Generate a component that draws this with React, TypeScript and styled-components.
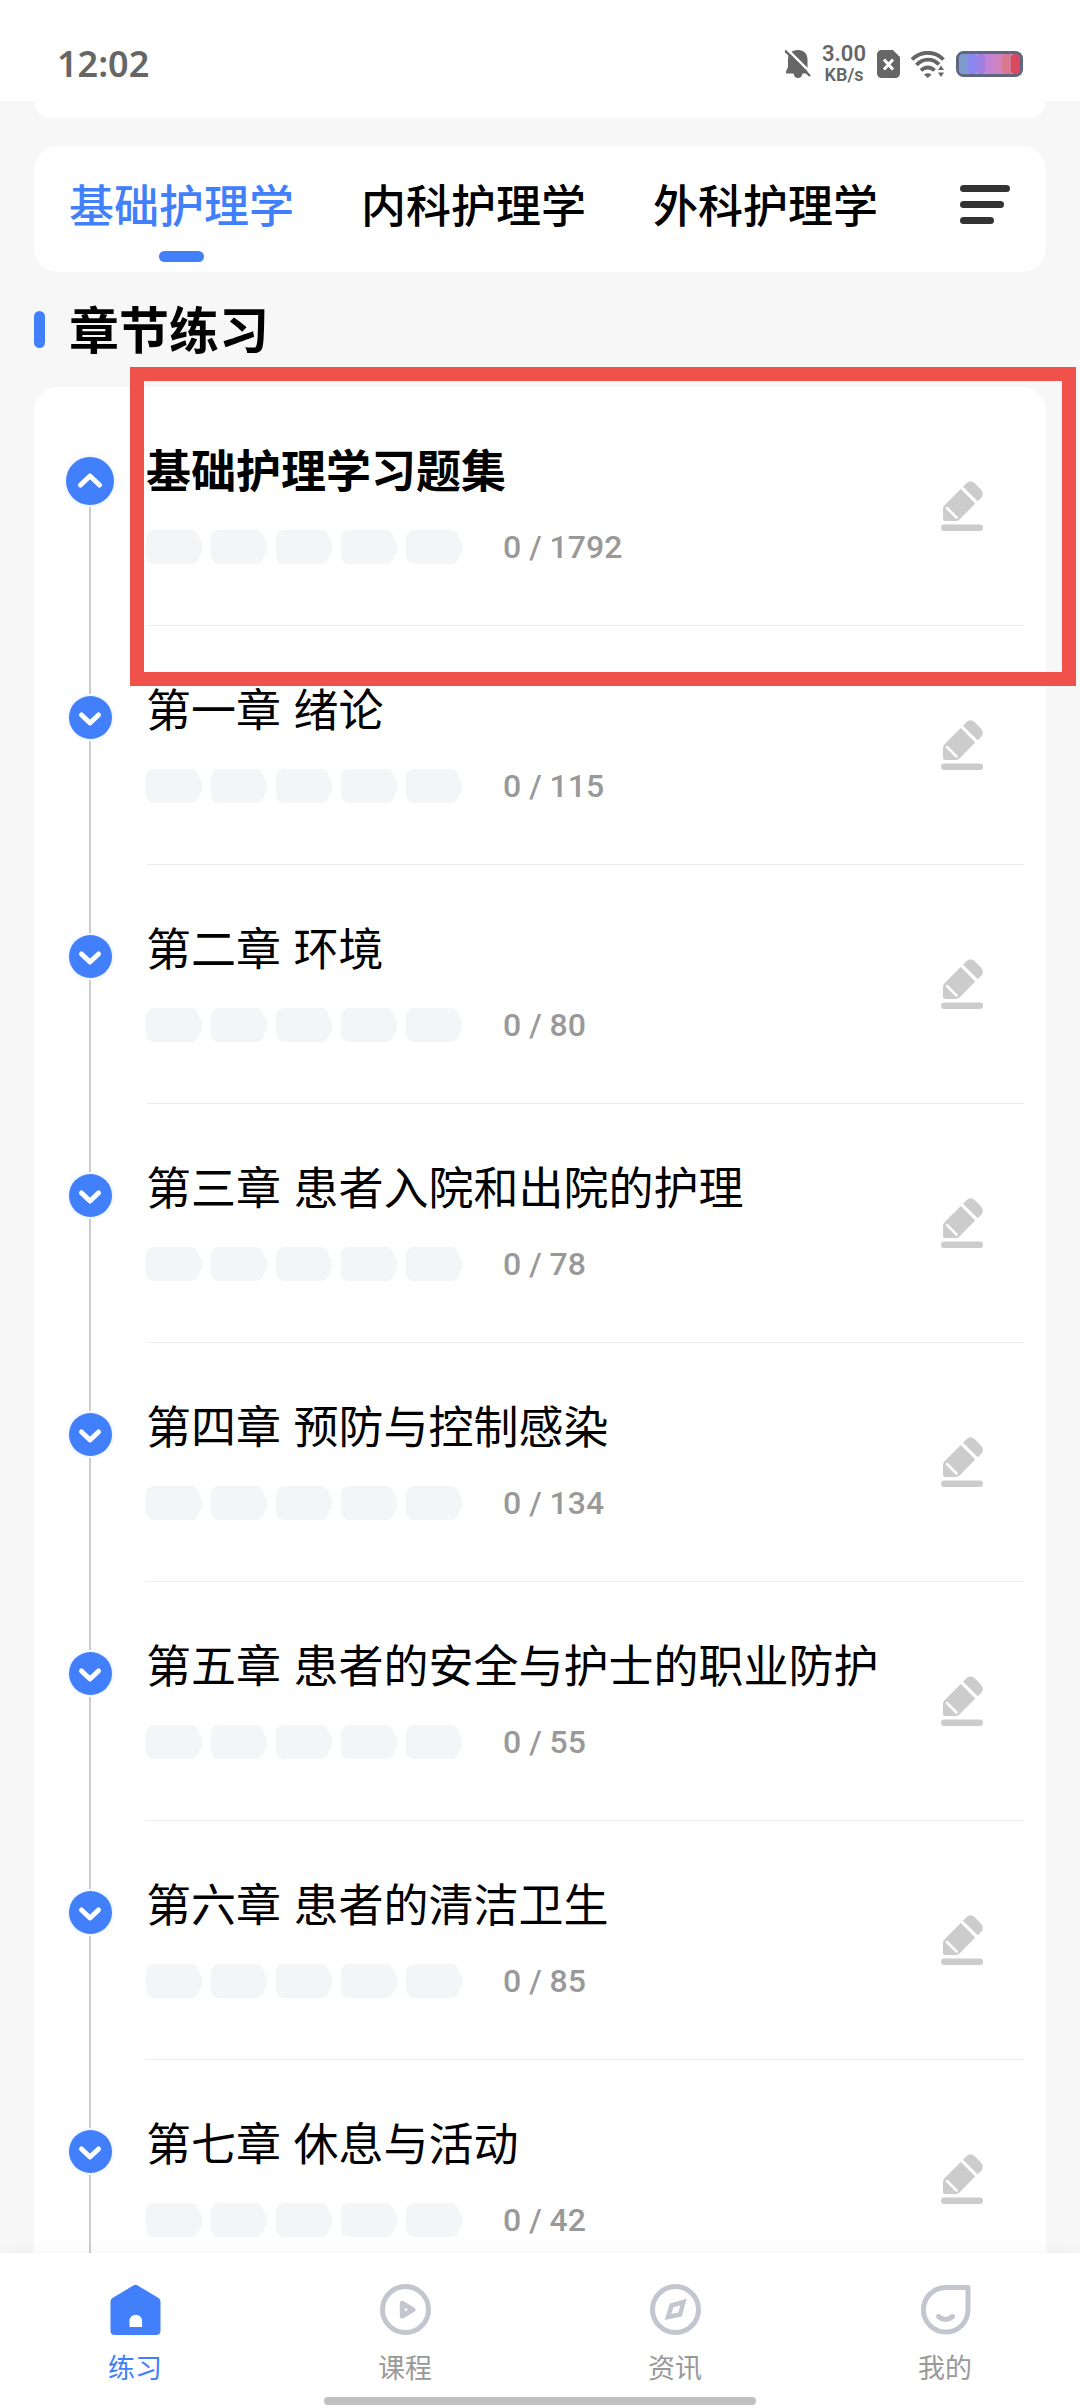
import React from "react";
import styled, { createGlobalStyle, css } from "styled-components";

const BLUE = "#417ffb";
const INK = "#000000";
const MUTED = "#999999";
const STATUS = "#666666";
const ICON_GREY = "#c3c6ce";

const GlobalStyle = createGlobalStyle`
  *, *::before, *::after { box-sizing: border-box; }
  body {
    margin: 0;
    background: #f7f7f7;
    color: ${INK};
    font-family: "Liberation Sans", "Noto Sans CJK SC", sans-serif;
  }
  button {
    margin: 0;
    padding: 0;
    border: 0;
    background: none;
    color: inherit;
    font: inherit;
    cursor: pointer;
  }
  h1, h2, p, ul, ol { margin: 0; padding: 0; }
  ul, ol { list-style: none; }
  svg { display: block; }
`;

const Shell = styled.div`
  display: flex;
  flex-direction: column;
  height: 100vh;
`;

/* Status bar */

const StatusBar = styled.header`
  display: flex;
  flex: none;
  align-items: center;
  justify-content: space-between;
  padding: 39px 57px 12px;
  background: #ffffff;
  color: ${STATUS};
  font-family: "Noto Sans", sans-serif;
`;

const Clock = styled.time`
  font-size: 36px;
  font-weight: 600;
  line-height: 50px;
`;

const StatusIcons = styled.div`
  display: flex;
  align-items: center;
  gap: 11px;
`;

const Speed = styled.div`
  display: flex;
  flex-direction: column;
  align-items: center;
  font-family: Roboto, sans-serif;
  font-weight: 600;
`;

const SpeedValue = styled.span`
  font-size: 22px;
  line-height: 22px;
`;

const SpeedUnit = styled.span`
  font-size: 18px;
  line-height: 20px;
`;

/* Scrolling content */

const Scroller = styled.main`
  flex: 1;
  min-height: 0;
  padding: 0 34px;
  overflow: hidden auto;
  scrollbar-width: none;
`;

const PreviousCard = styled.div`
  height: 17px;
  margin-bottom: 28px;
  border-radius: 0 0 22px 22px;
  background: #ffffff;
`;

const SubjectCard = styled.nav`
  display: flex;
  align-items: flex-start;
  justify-content: space-between;
  padding: 32px 36px 10px 35px;
  border-radius: 24px;
  background: #ffffff;
`;

const SubjectTabs = styled.div`
  display: flex;
  gap: 67px;
`;

const SubjectTab = styled.button<{ $active?: boolean }>`
  display: flex;
  flex-direction: column;
  align-items: center;
  gap: 13px;
  font-size: 45px;
  font-weight: 500;
  line-height: 60px;
  white-space: nowrap;
  color: ${(p) => (p.$active ? BLUE : INK)};

  &::after {
    content: "";
    width: 45px;
    height: 11px;
    border-radius: 6px;
    background: ${(p) => (p.$active ? BLUE : "transparent")};
  }
`;

const SectionHeading = styled.div`
  display: flex;
  align-items: center;
  gap: 24px;
  height: 115px;

  &::before {
    content: "";
    width: 11px;
    height: 37px;
    border-radius: 6px;
    background: ${BLUE};
  }
`;

const SectionTitle = styled.h1`
  padding-top: 4px;
  font-size: 50px;
  font-weight: 700;
  line-height: 60px;
`;

const ChapterCard = styled.section`
  position: relative;
  padding: 0 22px 0 32px;
  border-radius: 24px;
  background: #ffffff;
`;

const Highlight = styled.div`
  position: absolute;
  top: -20px;
  right: -30px;
  left: 96px;
  height: 319px;
  border: 14px solid #f0524b;
  pointer-events: none;
`;

const ChapterRow = styled.li`
  display: flex;
  gap: 32px;
`;

const Track = styled.div`
  display: flex;
  flex: none;
  flex-direction: column;
  align-items: center;
  width: 48px;
`;

const lineFill = css`
  width: 2px;
  background: #cccccc;
`;

const LineAbove = styled.span<{ $hidden: boolean }>`
  ${lineFill}
  height: 68px;
  margin-bottom: 2px;
  visibility: ${(p) => (p.$hidden ? "hidden" : "visible")};
`;

const LineBelow = styled.span`
  ${lineFill}
  flex: 1;
  margin-top: 2px;
`;

const Toggle = styled.button<{ $open: boolean }>`
  display: grid;
  flex: none;
  place-items: center;
  width: ${(p) => (p.$open ? 48 : 43)}px;
  height: ${(p) => (p.$open ? 48 : 43)}px;
  border-radius: 50%;
  background: ${BLUE};
  box-shadow: 0 0 4px rgba(65, 127, 251, 0.2);
`;

const ChapterBody = styled.div`
  display: flex;
  flex: 1;
  align-items: center;
  justify-content: space-between;
  padding-right: 41px;
  border-bottom: 1px solid #ededed;
`;

const ChapterInfo = styled.div`
  padding: 56px 0 61px;
`;

const ChapterTitle = styled.h2<{ $strong: boolean }>`
  margin-bottom: 27px;
  font-size: 45px;
  font-weight: ${(p) => (p.$strong ? 700 : 400)};
  line-height: 60px;
`;

const Progress = styled.div`
  display: flex;
  align-items: center;
  gap: 41px;
`;

const Cells = styled.div`
  display: flex;
  gap: 9px;
`;

const Count = styled.p`
  color: ${MUTED};
  font-family: Roboto, sans-serif;
  font-size: 32px;
  font-weight: 500;
  line-height: 34px;
`;

/* Bottom navigation */

const BottomBar = styled.footer`
  position: relative;
  flex: none;
  padding: 31px 0 3px;
  background: #ffffff;
  box-shadow: 0 -4px 16px rgba(0, 0, 0, 0.03);
`;

const BottomLinks = styled.nav`
  display: flex;
`;

const BottomLink = styled.a<{ $active?: boolean }>`
  display: flex;
  flex: 1;
  flex-direction: column;
  align-items: center;
  gap: 16px;
  color: ${(p) => (p.$active ? BLUE : MUTED)};
  font-size: 27px;
  line-height: 36px;
  text-decoration: none;
`;

const HomeIndicator = styled.div`
  width: 40%;
  height: 8px;
  margin: 10px auto 0;
  border-radius: 4px;
  background: #c0c0c0;
`;

/* Drawings */

const BellOffIcon = () => (
  <svg width="26" height="30" viewBox="0 0 26 30" aria-hidden="true">
    <path
      fill={STATUS}
      d="M13 1C6.500 1 3 5 3 10.500V18L1 22.500V24.500H8.500C9 27.500 10.700 29 13 29S17 27.500 17.500 24.500H22.500V10.500C22.500 5 19 1 13 1Z"
    />
    <path stroke="#ffffff" strokeWidth="2.500" d="M2 0L27 25" />
    <path stroke={STATUS} strokeWidth="2.400" d="M0 1.500L25 27" />
  </svg>
);

const SimOffIcon = () => (
  <svg width="23" height="28" viewBox="0 0 23 28" aria-hidden="true">
    <path
      fill={STATUS}
      d="M4.500 0H16L23 7V23.500A4.500 4.500 0 0 1 18.500 28H4.500A4.500 4.500 0 0 1 0 23.500V4.500A4.500 4.500 0 0 1 4.500 0Z"
    />
    <path stroke="#ffffff" strokeWidth="3" d="M7 9.500L16 19.500M16 9.500L7 19.500" />
  </svg>
);

const WifiIcon = () => (
  <svg width="34" height="27" viewBox="0 0 34 27" aria-hidden="true">
    <g fill="none" stroke={STATUS} strokeWidth="3.800">
      <path d="M1 8.500C10 -0.500 23.500 -0.500 32.500 8.500" />
      <path d="M5.500 14C12 7 21.500 7 28 13.500" />
      <path d="M10 19.500C14 15.500 19.500 15.500 23.500 19.500" />
    </g>
    <path fill={STATUS} d="M13 23.500C15.500 21.700 18 21.700 20.500 23.500L16.800 27Z" />
    <path fill={STATUS} d="M30 14.500L33 19H27ZM30 26L33 21.500H27Z" />
  </svg>
);

const BatteryIcon = () => (
  <svg width="67" height="26" viewBox="0 0 67 26" aria-hidden="true">
    <rect x="1.500" y="1.500" width="64" height="23" rx="6" fill="#b39ad6" stroke="#5e6682" strokeWidth="3" />
    <rect x="3" y="3" width="12" height="20" rx="4" fill="#7f9bcf" />
    <rect x="12" y="3" width="9" height="20" rx="3" fill="#8a86ee" />
    <rect x="21" y="3" width="8" height="20" rx="3" fill="#a07fe0" />
    <rect x="29" y="3" width="10" height="20" rx="3" fill="#c283d0" />
    <rect x="37" y="3" width="10" height="20" rx="3" fill="#ce83be" />
    <rect x="46" y="3" width="10" height="20" rx="3" fill="#d97990" />
    <rect x="55" y="3" width="9" height="20" rx="4" fill="#d9485f" />
  </svg>
);

const MenuIcon = () => (
  <svg width="50" height="60" viewBox="0 0 50 60" fill="#333333" aria-hidden="true">
    <rect x="0" y="7" width="50" height="7" rx="3.500" />
    <rect x="0" y="23" width="44" height="7" rx="3.500" />
    <rect x="0" y="39" width="34" height="7" rx="3.500" />
  </svg>
);

const ChevronIcon = ({ up }: { up: boolean }) => (
  <svg width="26" height="18" viewBox="0 0 26 18" aria-hidden="true">
    <path
      d={up ? "M3.500 13L13 4L22.500 13" : "M4.500 6L13 14L21.500 6"}
      fill="none"
      stroke="#ffffff"
      strokeWidth="5"
      strokeLinecap="round"
      strokeLinejoin="round"
    />
  </svg>
);

const CellIcon = () => (
  <svg width="56" height="34" viewBox="0 0 56 34" fill="#f4f5f7" aria-hidden="true">
    <path d="M8 0H45C49 0 52 3 53 8L54 11Q56 11 56 13V21Q56 24 54 24L53 27C52 31 49 34 45 34H8A8 8 0 0 1 0 26V8A8 8 0 0 1 8 0Z" />
  </svg>
);

const PencilIcon = () => (
  <svg width="42" height="50" viewBox="0 0 42 50" fill="#cccccc" aria-hidden="true">
    <path d="M22 5.800L25.500 2.200Q29.500 -1.800 33.500 2L39.500 8Q43.500 12.500 40.500 16.500L36.800 20.300Z" />
    <path d="M19.800 8L34.200 22.500L19 38Q17 40 15 40H4Q2 40 2 38V28Q2 25.500 4 23.800Z" />
    <path d="M6 27L15.500 36.500" stroke="#ffffff" strokeWidth="2.500" strokeLinecap="round" />
    <rect x="0" y="43.500" width="42" height="6.500" rx="3.250" />
  </svg>
);

const HomeIcon = () => (
  <svg width="51" height="51" viewBox="0 0 51 51" aria-hidden="true">
    <path
      fill={BLUE}
      d="M23.300 1.500Q25.500 0 27.700 1.500L48.500 14Q50.500 15.300 50.500 17.500V46.500Q50.500 51 46 51H5Q0.500 51 0.500 46.500V17.500Q0.500 15.300 2.500 14Z"
    />
    <path fill="#ffffff" d="M19.500 43V37A6.300 6.300 0 0 1 32.100 37V43Z" />
  </svg>
);

const CourseIcon = () => (
  <svg width="51" height="51" viewBox="0 0 51 51" fill="none" stroke={ICON_GREY} strokeWidth="5" aria-hidden="true">
    <circle cx="25.500" cy="25.500" r="23" />
    <path strokeLinejoin="round" d="M22.300 19.300V32L33 25.700Z" />
  </svg>
);

const NewsIcon = () => (
  <svg width="51" height="51" viewBox="0 0 51 51" fill="none" stroke={ICON_GREY} strokeWidth="5" aria-hidden="true">
    <circle cx="25.500" cy="25.500" r="23" />
    <path strokeWidth="4.500" d="M21.500 21.500L33.500 18L30 30.500L18 33Z" />
  </svg>
);

const ProfileIcon = () => (
  <svg
    width="51"
    height="51"
    viewBox="0 0 51 51"
    fill="none"
    stroke={ICON_GREY}
    strokeWidth="5"
    strokeLinecap="round"
    strokeLinejoin="round"
    aria-hidden="true"
  >
    <path d="M25.500 3.500H48V26A22.300 22.300 0 1 1 25.500 3.500Z" />
    <path d="M18.500 32.500Q25.500 38.500 32.500 32.500" />
  </svg>
);

/* Data */

const subjects = ["基础护理学", "内科护理学", "外科护理学"];

const chapters = [
  { title: "基础护理学习题集", total: 1792 },
  { title: "第一章 绪论", total: 115 },
  { title: "第二章 环境", total: 80 },
  { title: "第三章 患者入院和出院的护理", total: 78 },
  { title: "第四章 预防与控制感染", total: 134 },
  { title: "第五章 患者的安全与护士的职业防护", total: 55 },
  { title: "第六章 患者的清洁卫生", total: 85 },
  { title: "第七章 休息与活动", total: 42 },
];

const destinations = [
  { label: "练习", href: "#practice", Icon: HomeIcon },
  { label: "课程", href: "#courses", Icon: CourseIcon },
  { label: "资讯", href: "#news", Icon: NewsIcon },
  { label: "我的", href: "#me", Icon: ProfileIcon },
];

const Chapter = ({ title, total, root }: { title: string; total: number; root: boolean }) => (
  <ChapterRow>
    <Track>
      <LineAbove $hidden={root} />
      <Toggle $open={root} type="button" aria-label={title} aria-expanded={root}>
        <ChevronIcon up={root} />
      </Toggle>
      <LineBelow />
    </Track>
    <ChapterBody>
      <ChapterInfo>
        <ChapterTitle $strong={root}>{title}</ChapterTitle>
        <Progress>
          <Cells>
            {[0, 1, 2, 3, 4].map((n) => (
              <CellIcon key={n} />
            ))}
          </Cells>
          <Count>0 / {total}</Count>
        </Progress>
      </ChapterInfo>
      <button type="button" aria-label={title}>
        <PencilIcon />
      </button>
    </ChapterBody>
  </ChapterRow>
);

export default function App() {
  return (
    <Shell>
      <GlobalStyle />
      <StatusBar>
        <Clock>12:02</Clock>
        <StatusIcons>
          <BellOffIcon />
          <Speed>
            <SpeedValue>3.00</SpeedValue>
            <SpeedUnit>KB/s</SpeedUnit>
          </Speed>
          <SimOffIcon />
          <WifiIcon />
          <BatteryIcon />
        </StatusIcons>
      </StatusBar>

      <Scroller>
        <PreviousCard />
        <SubjectCard>
          <SubjectTabs>
            {subjects.map((name, i) => (
              <SubjectTab key={name} type="button" $active={i === 0}>
                {name}
              </SubjectTab>
            ))}
          </SubjectTabs>
          <button type="button" aria-label="科目">
            <MenuIcon />
          </button>
        </SubjectCard>

        <SectionHeading>
          <SectionTitle>章节练习</SectionTitle>
        </SectionHeading>

        <ChapterCard>
          <ol>
            {chapters.map((c, i) => (
              <Chapter key={c.title} title={c.title} total={c.total} root={i === 0} />
            ))}
          </ol>
          <Highlight />
        </ChapterCard>
      </Scroller>

      <BottomBar>
        <BottomLinks>
          {destinations.map(({ label, href, Icon }, i) => (
            <BottomLink key={label} href={href} $active={i === 0}>
              <Icon />
              {label}
            </BottomLink>
          ))}
        </BottomLinks>
        <HomeIndicator />
      </BottomBar>
    </Shell>
  );
}
